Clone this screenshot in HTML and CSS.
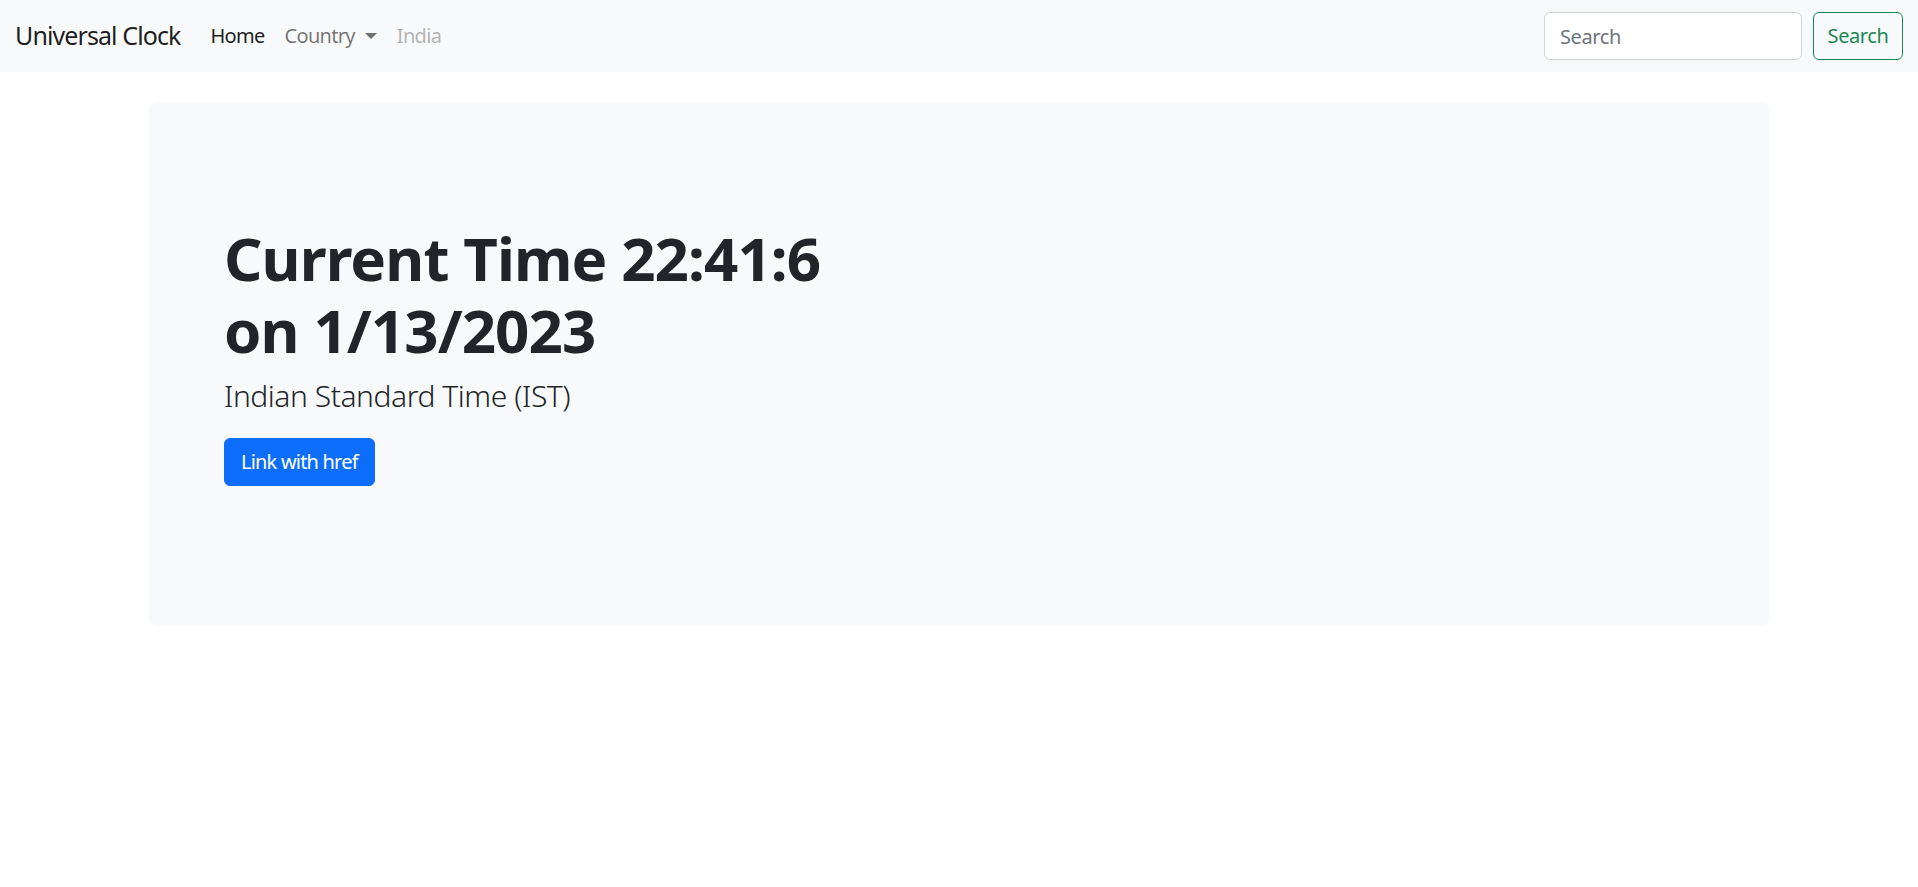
FILE: index.html
```html
<!DOCTYPE html>
<html lang="en">
<head>
<meta charset="utf-8">
<title>Universal Clock</title>
<link rel="stylesheet" href="styles.css">
</head>
<body>
<nav class="navbar">
  <div class="navbar-inner">
    <a class="brand" href="#">Universal Clock</a>
    <ul class="nav">
      <li><a class="nav-link active" href="#">Home</a></li>
      <li><a class="nav-link dropdown" href="#">Country<span class="caret"></span></a></li>
      <li><a class="nav-link disabled">India</a></li>
    </ul>
    <form class="search">
      <input class="search-input" type="search" placeholder="Search">
      <button class="search-btn" type="button">Search</button>
    </form>
  </div>
</nav>
<main class="container">
  <section class="jumbo">
    <h1 class="title">Current Time 22:41:6<br>on 1/13/2023</h1>
    <p class="zone">Indian Standard Time (IST)</p>
    <a class="btn-primary" href="#">Link with href</a>
  </section>
</main>
</body>
</html>
```
FILE: styles.css
```css
* { box-sizing: border-box; }
html, body { margin: 0; padding: 0; }
body {
  font-family: "Noto Sans", "Open Sans", "Liberation Sans", sans-serif;
  font-size: 20px;
  line-height: 1.5;
  color: #212529;
  background: #fff;
}
a { text-decoration: none; }

.navbar {
  background: #f8f9fa;
  padding: 11px 0;
}
.navbar-inner {
  display: flex;
  align-items: center;
  padding: 0 15px;
}
.brand {
  font-size: 25px;
  letter-spacing: -0.036em;
  color: rgba(0,0,0,.9);
  margin-right: 20px;
  padding: 6px 0;
  line-height: 1.5;
}
.nav {
  display: flex;
  list-style: none;
  margin: 0;
  padding: 0;
  flex: 1;
}
.nav-link {
  display: block;
  padding: 10px 10px;
  font-size: 20px;
  letter-spacing: -0.035em;
  color: rgba(0,0,0,.55);
}
.nav-link.active { color: rgba(0,0,0,.9); }
.nav-link.disabled { color: rgba(0,0,0,.3); }
.caret {
  display: inline-block;
  margin-left: 10px;
  vertical-align: 4px;
  border-top: 6px solid rgba(0,0,0,.55);
  border-left: 6px solid transparent;
  border-right: 6px solid transparent;
}
.search {
  display: flex;
  gap: 11px;
}
.search-input {
  width: 258px;
  height: 48px;
  padding: 7px 15px;
  font: inherit;
  font-size: 20px;
  letter-spacing: -0.02em;
  color: #212529;
  background: #fff;
  border: 1px solid #ced4da;
  border-radius: 6px;
}
.search-input::placeholder { color: #6c757d; }
.search-btn {
  height: 48px;
  width: 90px;
  padding: 0;
  font: inherit;
  font-size: 20px;
  letter-spacing: -0.02em;
  color: #198754;
  background: transparent;
  border: 1px solid #198754;
  border-radius: 6px;
}

.container {
  max-width: 1650px;
  margin: 30px auto;
  padding: 0 15px;
}
.jumbo {
  background: #f8f9fa;
  border-radius: 8px;
  padding: 120px 75px 140px;
}
.title {
  margin: 0 0 7px;
  font-size: 60px;
  font-weight: 700;
  letter-spacing: -0.015em;
  line-height: 1.2;
  color: #212529;
}
.zone {
  margin: 0 0 20px;
  font-size: 30px;
  letter-spacing: -0.015em;
  line-height: 1.5;
  font-weight: 300;
}
.btn-primary {
  display: inline-block;
  height: 48px;
  line-height: 46px;
  padding: 0 16px;
  font-size: 20px;
  letter-spacing: -0.04em;
  color: #fff;
  background: #0d6efd;
  border: 1px solid #0d6efd;
  border-radius: 6px;
}
```
